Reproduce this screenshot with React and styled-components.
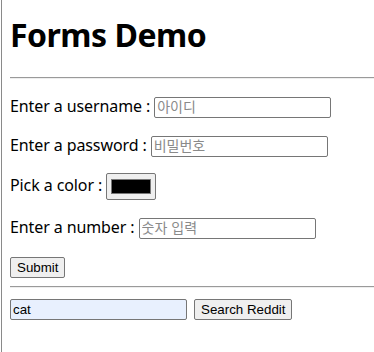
import React, { useState } from 'react';
import styled, { createGlobalStyle } from 'styled-components';

const GlobalStyle = createGlobalStyle`
    body {
        margin: 0;
        background: #fff;
        font-family: "Noto Sans", "Noto Sans CJK KR", sans-serif;
    }
`

const Page = styled.div`
    min-height: 352px;
    margin-left: 1px;
    border-left: 1px solid #8a8a8a;
    padding-left: 8px;
    box-sizing: border-box;
    overflow: hidden;
`

const Title = styled.h1`
    font-size: 32px;
    font-weight: 700;
    letter-spacing: -0.5px;
    margin: 13px 0 21px;
    color: #000;
`

const Rule = styled.hr`
    margin: 8px 0;
    border: none;
    border-top: 1px solid #9a9a9a;
    border-bottom: 1px solid #eee;
`

const Row = styled.p`
    margin: 16px 0;
    font-size: 16px;
    letter-spacing: -0.1px;
    color: #000;
`

const Field = styled.input`
    box-sizing: border-box;
    width: 177px;
    height: 21px;
    padding: 1px 2px;
    border: 1px solid #767676;
    border-radius: 2px;
    font-family: "Liberation Sans", "Noto Sans CJK KR", sans-serif;
    font-size: 13.33px;
    letter-spacing: normal;
    background: ${p => (p.$filled ? '#e8f0fe' : '#fff')};
    &::placeholder {
        color: #8a8a8a;
        font-size: 14px;
    }
`

const ColorBox = styled.input`
    box-sizing: border-box;
    width: 50px;
    height: 27px;
    padding: 1px 2px;
    border: 1px solid #767676;
    border-radius: 2px;
    background: #efefef;
    vertical-align: middle;
    &::-webkit-color-swatch-wrapper {
        padding: 4px 2px;
    }
    &::-webkit-color-swatch {
        border: 1px solid #777;
    }
`

const Button = styled.button`
    box-sizing: border-box;
    height: 21px;
    padding: 1px 6px;
    border: 1px solid #767676;
    border-radius: 2px;
    background: #efefef;
    font-family: "Liberation Sans", sans-serif;
    font-size: 13.33px;
    color: #000;
`

const SearchForm = styled.form`
    display: flex;
    align-items: center;
    gap: 7px;
    margin-top: 11px;
`

function App () {
    const [query, setQuery] = useState('cat')

    return(
        <Page>
            <GlobalStyle />
            <Title>Forms Demo</Title>
            <Rule />
            <form onSubmit={e => e.preventDefault()}>
                <Row>Enter a username : <Field type='text' placeholder='아이디' /></Row>
                <Row>Enter a password : <Field type='password' placeholder='비밀번호' /></Row>
                <Row>Pick a color : <ColorBox type='color' defaultValue='#000000' /></Row>
                <Row>Enter a number : <Field type='number' placeholder='숫자 입력' /></Row>
                <Button type='submit'>Submit</Button>
            </form>
            <Rule />
            <SearchForm onSubmit={e => e.preventDefault()}>
                <Field type='text' value={query} onChange={e => setQuery(e.target.value)} $filled />
                <Button type='submit'>Search Reddit</Button>
            </SearchForm>
        </Page>
    )
}

export default App
